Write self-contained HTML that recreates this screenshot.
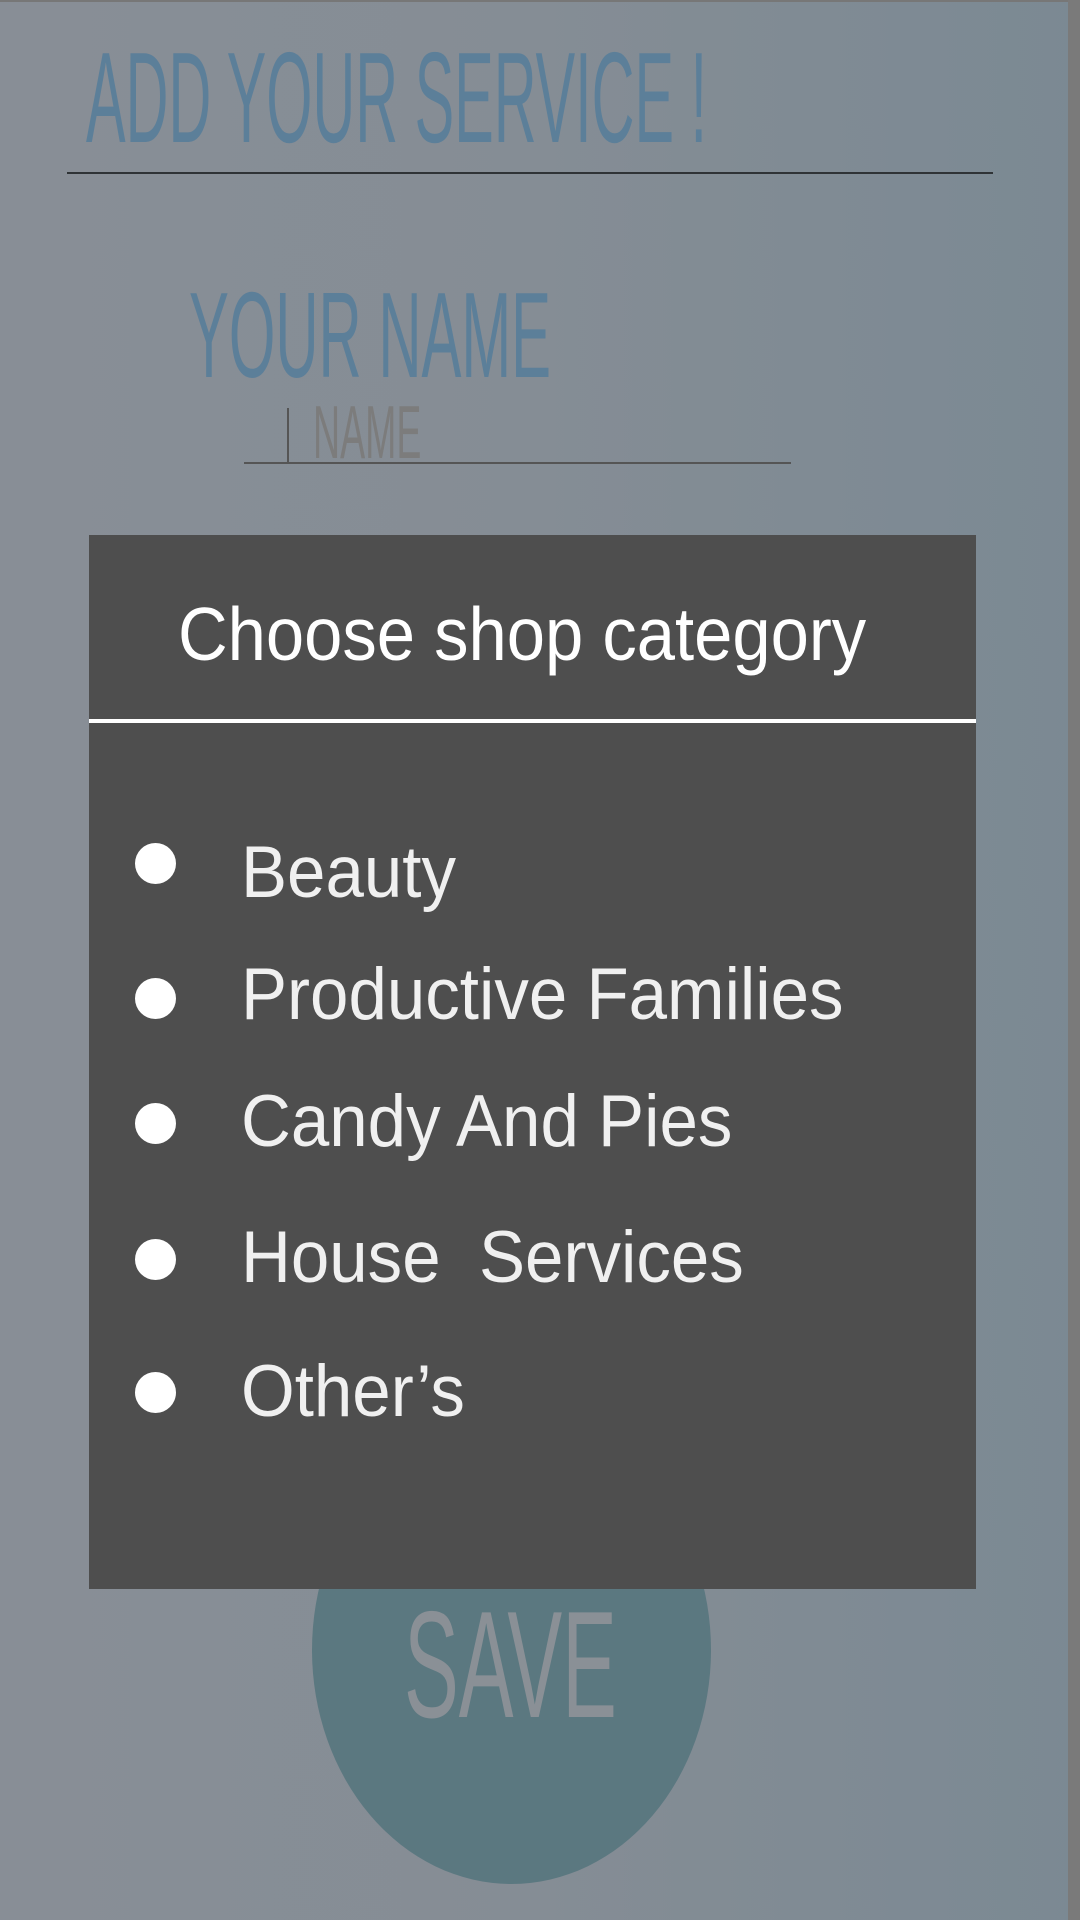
<!DOCTYPE html>
<html><head><meta charset="utf-8"><style>
*{margin:0;padding:0;box-sizing:border-box}
body{width:1080px;height:1920px;overflow:hidden;position:relative;font-family:"Liberation Sans",sans-serif;background:linear-gradient(90deg,#888e96 0%,#858d95 50%,#7b8993 100%)}
.a{position:absolute;white-space:nowrap;line-height:1;transform-origin:0 0}
.edge{position:absolute;right:0;top:0;width:12px;height:1920px;background:#7a7a7a}
.topb{position:absolute;left:0;top:0;width:1080px;height:2px;background:#777}
.dlg{position:absolute;left:89px;top:535px;width:887px;height:1054px;background:#4e4e4e}
.dot{position:absolute;left:135px;width:41px;height:41px;border-radius:50%;background:#fff}
.it{position:absolute;left:241px;font-size:73px;color:#f0f0f0;line-height:1;white-space:nowrap;transform:scaleX(0.946);transform-origin:0 0}
</style></head><body>
<div class="topb"></div>
<div class="edge"></div>
<div class="a" style="left:86px;top:34px;font-size:129px;color:#5c7f99;transform:scaleX(0.46)">ADD YOUR SERVICE !</div>
<div style="position:absolute;left:67px;top:172px;width:926px;height:2px;background:#2f3336"></div>
<div class="a" style="left:189px;top:274px;font-size:122px;color:#5c7f99;transform:scaleX(0.49)">YOUR NAME</div>
<div style="position:absolute;left:287px;top:408px;width:2px;height:55px;background:#555"></div>
<div class="a" style="left:313px;top:395px;font-size:75px;color:#7c7c7c;transform:scaleX(0.5)">NAME</div>
<div style="position:absolute;left:244px;top:462px;width:547px;height:2px;background:#555"></div>
<div style="position:absolute;left:312px;top:1416px;width:399px;height:468px;border-radius:50%;background:#5b7880"></div>
<div class="a" style="left:404px;top:1589px;font-size:152px;color:#8a9096;transform:scaleX(0.54)">SAVE</div>
<div class="dlg"></div>
<div class="a" style="left:178px;top:597px;font-size:75px;color:#fff;transform:scaleX(0.917)">Choose shop category</div>
<div style="position:absolute;left:89px;top:719px;width:887px;height:4px;background:#fff"></div>
<div class="dot" style="top:843px"></div><div class="it" style="top:836px">Beauty</div>
<div class="dot" style="top:978px"></div><div class="it" style="top:958px">Productive Families</div>
<div class="dot" style="top:1103px"></div><div class="it" style="top:1085px">Candy And Pies</div>
<div class="dot" style="top:1239px"></div><div class="it" style="top:1221px">House&nbsp; Services</div>
<div class="dot" style="top:1372px"></div><div class="it" style="top:1355px">Other’s</div>
</body></html>
